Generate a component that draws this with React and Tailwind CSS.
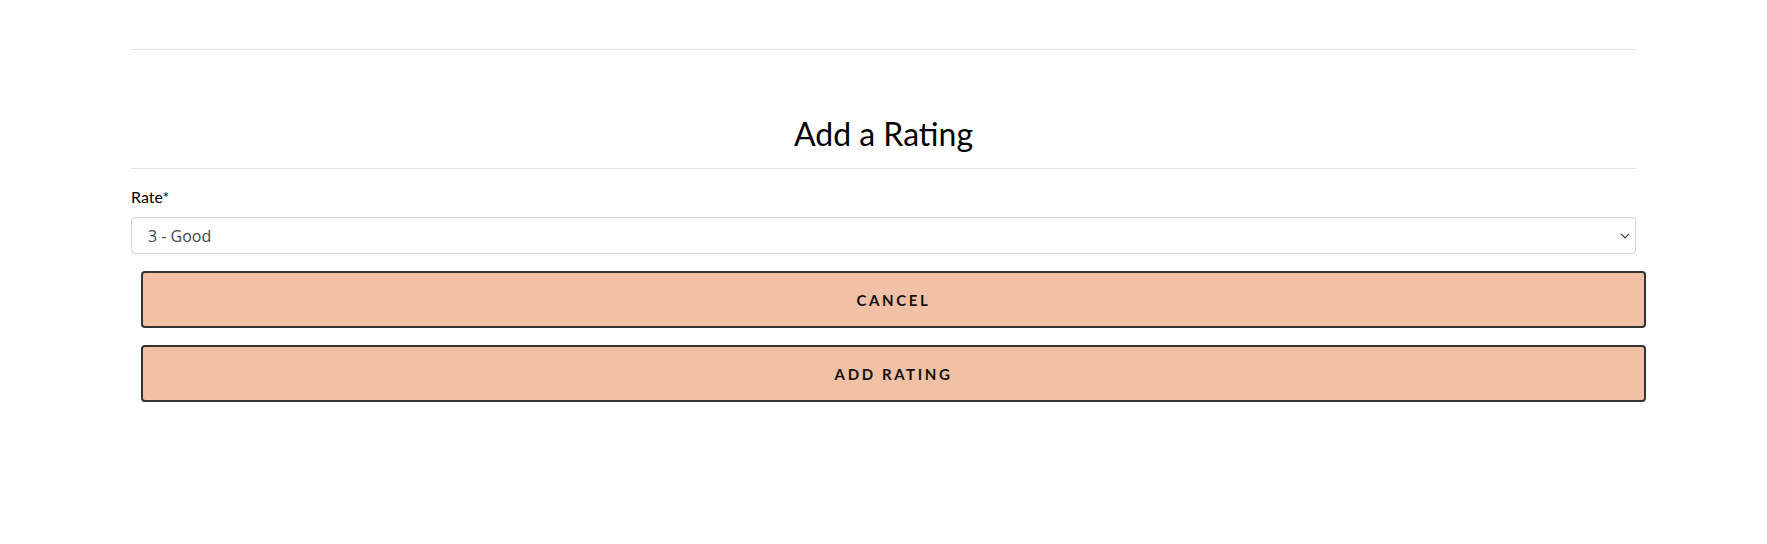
import { useState } from "react";

function App() {
  const [rate, setRate] = useState("3");

  return (
    <div className="min-h-[544px] bg-white px-[131px] pt-[49px] font-['Lato',sans-serif] text-black">
      <hr className="border-0 border-t border-[#e3e3e3]" />

      {/* Title */}
      <h2 className="mt-[65px] mb-[15px] text-center text-[32px] leading-[1.2] font-normal">
        Add a Rating
      </h2>
      <hr className="border-0 border-t border-[#e3e3e3]" />

      {/* Form */}
      <form className="mt-[16px]" onSubmit={(e) => e.preventDefault()}>
        <label className="block mb-[8px] text-[16px] leading-[24px] font-normal">Rate*</label>
        <div className="relative">
          <select
            value={rate}
            onChange={(e) => setRate(e.target.value)}
            className="block w-full h-[37px] appearance-none rounded-[4px] border border-[#ced4da] bg-white pl-[16px] pr-[36px] text-[16px] text-[#3f4650] font-['Open_Sans',sans-serif] focus:outline-none"
          >
            <option value="1">1 - Poor</option>
            <option value="2">2 - Fair</option>
            <option value="3">3 - Good</option>
            <option value="4">4 - Very Good</option>
            <option value="5">5 - Excellent</option>
          </select>
          <svg
            className="pointer-events-none absolute right-[6px] top-1/2 -translate-y-1/2"
            width="10"
            height="10"
            viewBox="0 0 16 16"
            fill="none"
            stroke="#343a40"
            strokeWidth="2"
            strokeLinecap="round"
            strokeLinejoin="round"
          >
            <path d="M2 5l6 6 6-6" />
          </svg>
        </div>

        {/* Buttons */}
        <div className="ml-[10px] -mr-[10px] mt-[17px] flex flex-col gap-[17px]">
          <button
            type="button"
            className="h-[57px] w-full rounded-[4px] border-2 border-[#333333] bg-[#f2c1a5] text-[15px] font-bold uppercase tracking-[2.6px] text-[#111]"
          >
            Cancel
          </button>
          <button
            type="submit"
            className="h-[57px] w-full rounded-[4px] border-2 border-[#333333] bg-[#f2c1a5] text-[15px] font-bold uppercase tracking-[2.6px] text-[#111]"
          >
            Add Rating
          </button>
        </div>
      </form>
    </div>
  );
}

export default App;
